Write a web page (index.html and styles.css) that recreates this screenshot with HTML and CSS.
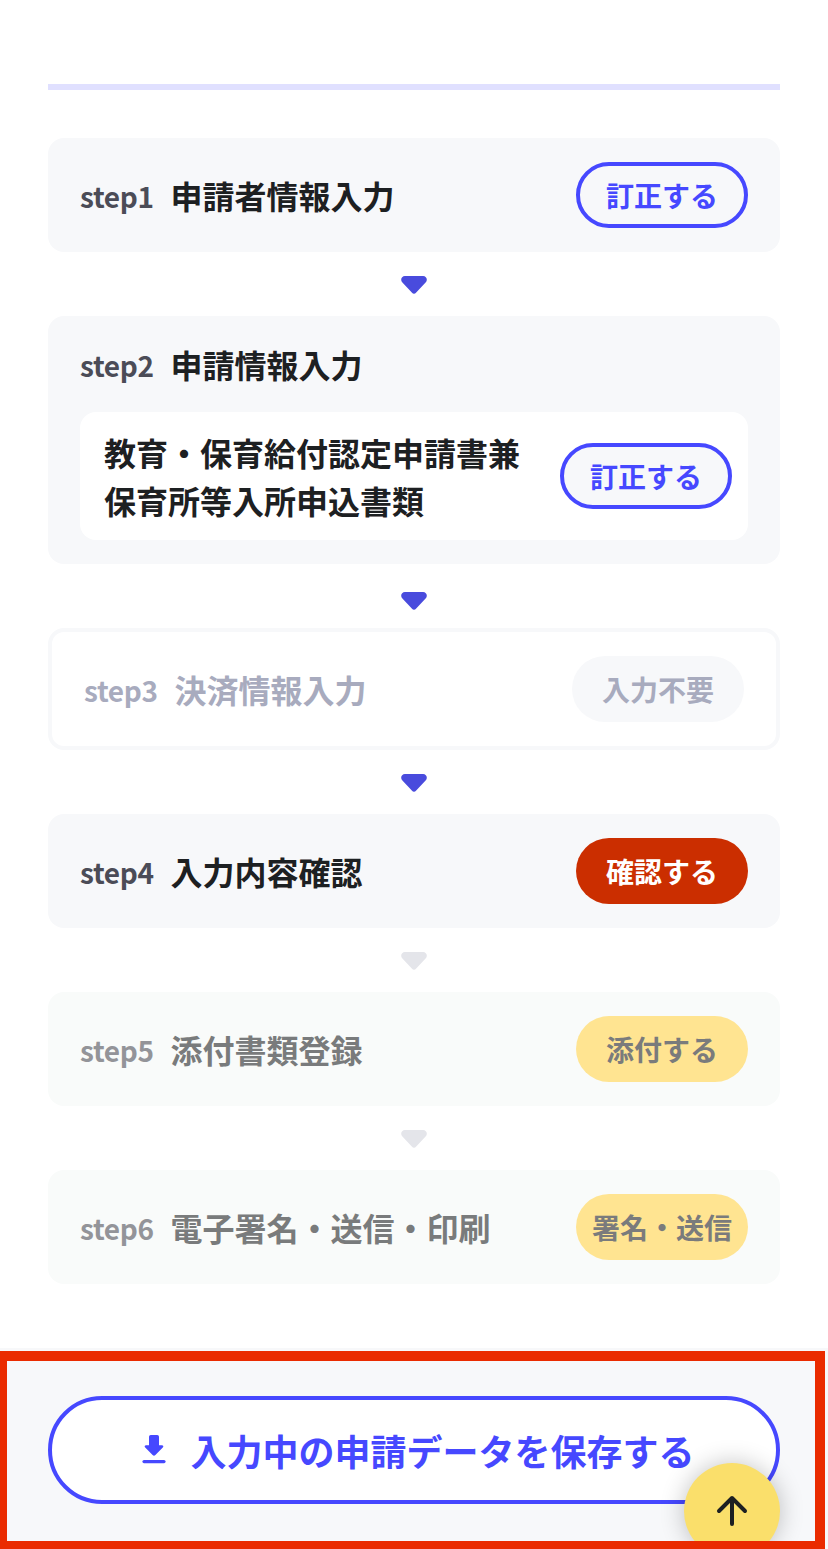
FILE: index.html
```html
<!DOCTYPE html>
<html lang="ja">
<head>
  <meta charset="UTF-8">
  <meta name="viewport" content="width=device-width, initial-scale=1.0">
  <title>申請データの入力</title>
  <link rel="stylesheet" href="styles.css">
</head>
<body>
  <main class="steps">
    <section class="step">
      <div class="step-head">
        <h2 class="step-title"><span class="step-no">step1</span>申請者情報入力</h2>
        <button class="btn btn-outline">訂正する</button>
      </div>
    </section>

    <div class="arrow"><svg width="26" height="18" viewBox="0 0 26 18"><path d="M4 0H22C25.7 0 27 4.2 24.6 6.6L15.2 16.6Q13 19.1 10.8 16.6L1.4 6.6C-1 4.2 .3 0 4 0Z"/></svg></div>

    <section class="step step-group">
      <div class="step-head">
        <h2 class="step-title"><span class="step-no">step2</span>申請情報入力</h2>
      </div>
      <div class="form-item">
        <p class="form-name">教育・保育給付認定申請書兼保育所等入所申込書類</p>
        <button class="btn btn-outline">訂正する</button>
      </div>
    </section>

    <div class="arrow arrow-low"><svg width="26" height="18" viewBox="0 0 26 18"><path d="M4 0H22C25.7 0 27 4.2 24.6 6.6L15.2 16.6Q13 19.1 10.8 16.6L1.4 6.6C-1 4.2 .3 0 4 0Z"/></svg></div>

    <section class="step step-skip">
      <div class="step-head">
        <h2 class="step-title"><span class="step-no">step3</span>決済情報入力</h2>
        <button class="btn btn-none" disabled>入力不要</button>
      </div>
    </section>

    <div class="arrow"><svg width="26" height="18" viewBox="0 0 26 18"><path d="M4 0H22C25.7 0 27 4.2 24.6 6.6L15.2 16.6Q13 19.1 10.8 16.6L1.4 6.6C-1 4.2 .3 0 4 0Z"/></svg></div>

    <section class="step">
      <div class="step-head">
        <h2 class="step-title"><span class="step-no">step4</span>入力内容確認</h2>
        <button class="btn btn-primary">確認する</button>
      </div>
    </section>

    <div class="arrow arrow-off"><svg width="26" height="18" viewBox="0 0 26 18"><path d="M4 0H22C25.7 0 27 4.2 24.6 6.6L15.2 16.6Q13 19.1 10.8 16.6L1.4 6.6C-1 4.2 .3 0 4 0Z"/></svg></div>

    <section class="step step-off">
      <div class="step-head">
        <h2 class="step-title"><span class="step-no">step5</span>添付書類登録</h2>
        <button class="btn btn-wait" disabled>添付する</button>
      </div>
    </section>

    <div class="arrow arrow-off"><svg width="26" height="18" viewBox="0 0 26 18"><path d="M4 0H22C25.7 0 27 4.2 24.6 6.6L15.2 16.6Q13 19.1 10.8 16.6L1.4 6.6C-1 4.2 .3 0 4 0Z"/></svg></div>

    <section class="step step-off">
      <div class="step-head">
        <h2 class="step-title"><span class="step-no">step6</span>電子署名・送信・印刷</h2>
        <button class="btn btn-wait" disabled>署名・送信</button>
      </div>
    </section>
  </main>

  <footer class="save-area">
    <button class="save-btn">
      <svg width="24" height="30" viewBox="0 0 24 30">
        <path d="M8.8 0H15.2Q17 0 17 1.8V10.2H19.8C21.4 10.2 21.8 11.6 20.8 12.6L13.4 20Q12 21.4 10.6 20L3.2 12.6C2.2 11.6 2.6 10.2 4.2 10.2H7V1.8Q7 0 8.8 0Z" fill="currentColor"/>
        <path d="M2 26.6H22" stroke="currentColor" stroke-width="3.2" stroke-linecap="round"/>
      </svg>
      <span>入力中の申請データを保存する</span>
    </button>
    <a class="to-top" href="#" aria-label="ページの先頭へ">
      <svg width="32" height="32" viewBox="0 0 32 32" fill="none" stroke="#1d2022" stroke-width="4" stroke-linecap="round" stroke-linejoin="round"><path d="M16 29V3M3 16L16 3L29 16"/></svg>
    </a>
    <div class="highlight"></div>
  </footer>
</body>
</html>
```
FILE: styles.css
```css
* {
  box-sizing: border-box;
}

body {
  margin: 0;
  height: 1549px;
  overflow: hidden;
  background: #fff;
  color: #1d2022;
  font-family: "Noto Sans CJK JP", sans-serif;
}

.steps {
  margin: 84px 48px 64px;
  padding-top: 48px;
  border-top: 6px solid #e0e0ff;
}

.step {
  padding: 24px 32px;
  border-radius: 16px;
  background: #f7f8fa;
}

.step-head {
  display: flex;
  justify-content: space-between;
  align-items: center;
}

.step-title {
  margin: 0;
  font-size: 32px;
  line-height: 48px;
  font-weight: 700;
}

.step-no {
  display: inline-block;
  width: 90.5px;
  font-size: 28px;
  line-height: 40px;
  font-weight: 700;
  letter-spacing: -0.3px;
  vertical-align: 1px;
  color: #4b4c57;
}

.btn {
  display: flex;
  justify-content: center;
  align-items: center;
  flex-shrink: 0;
  width: 172px;
  height: 66px;
  padding: 0 0 1px;
  border: none;
  border-radius: 33px;
  font-family: inherit;
  font-size: 28px;
  font-weight: 700;
}

.btn-outline {
  border: 4px solid #4648ff;
  background: #f7f8fa;
  color: #4648ff;
}

.btn-primary {
  background: #cb2e00;
  color: #fff;
}

.btn-none {
  background: #f7f8fa;
  color: #a8abbe;
}

.btn-wait {
  background: #ffe491;
  color: #7a7b7c;
}

.step-group .step-head {
  margin-bottom: 24px;
}

.form-item {
  display: flex;
  justify-content: space-between;
  align-items: center;
  padding: 16px 16px 16px 24px;
  border-radius: 16px;
  background: #fff;
}

.form-name {
  width: 416px;
  margin: 0;
  font-size: 32px;
  line-height: 48px;
  font-weight: 700;
}

.step-skip {
  border: 4px solid #f7f8fa;
  background: #fff;
}

.step-skip .step-title,
.step-skip .step-no {
  color: #a8abbe;
}

.step-off {
  background: #f9fbfa;
}

.step-off .step-title {
  color: #797b7c;
}

.step-off .step-no {
  color: #939499;
}

.arrow {
  display: flex;
  justify-content: center;
  height: 64px;
  padding-top: 24px;
  fill: #494bdd;
}

.arrow-low {
  padding-top: 28px;
}

.arrow-off {
  fill: #e4e5ea;
}

.save-area {
  position: relative;
  height: 201px;
  padding: 48px;
  background: #f7f8fa;
}

.save-btn {
  display: flex;
  justify-content: center;
  align-items: center;
  gap: 24px;
  width: 100%;
  height: 108px;
  padding: 0 0 1px 9px;
  border: 4px solid #4648ff;
  border-radius: 54px;
  background: #fff;
  color: #4648ff;
  font-family: inherit;
  font-size: 36px;
  font-weight: 700;
}

.to-top {
  position: absolute;
  top: 115px;
  right: 48px;
  display: flex;
  justify-content: center;
  align-items: center;
  width: 96px;
  height: 96px;
  border-radius: 50%;
  background: #fadf6b;
  box-shadow: 0 0 24px rgba(0, 0, 0, 0.24);
}

/* red frame around the save area */
.highlight {
  position: absolute;
  top: 2.6px;
  left: -3.5px;
  width: 828px;
  height: 200px;
  border: 10px solid #ea2b00;
}
```
